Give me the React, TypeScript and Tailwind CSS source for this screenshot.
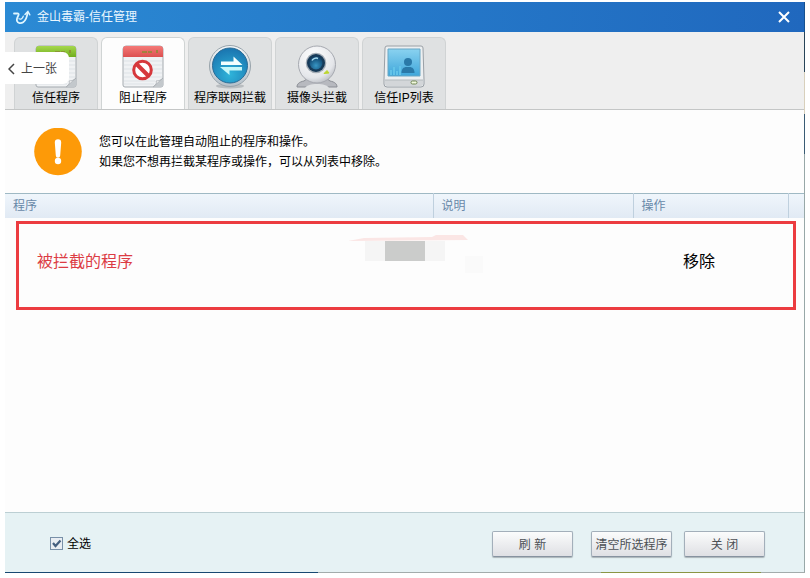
import { useState } from 'react';
import type { ReactNode } from 'react';
import { clsx } from 'clsx';

function LogoIcon() {
  return (
    <svg
      viewBox="0 0 18 15"
      className="h-[15px] w-[18px]"
      fill="none"
      stroke="#e0f6ff"
      strokeWidth="1.8"
      strokeLinecap="round"
      aria-hidden
    >
      <path d="M1 3.500h3.500c1 0 1.500.6 1 1.600C4.300 7.300 3.300 9 4 11c.8 2.400 4 2.600 6.200 1.200C12.800 10.500 14 7 14.500 3" />
      <path d="M6 8.800c1.800 1 3.700-.3 4.300-2.600" strokeWidth="1.300" />
      <path d="m12 4.500 2.900-3 1.900 3.300" strokeWidth="1.500" />
    </svg>
  );
}

function CalendarIcon({ tone, blocked }: { tone: 'green' | 'red'; blocked?: boolean }) {
  const top = tone === 'green' ? '#a5d84c' : '#f47a78';
  const bottom = tone === 'green' ? '#71ad1f' : '#dc5050';
  return (
    <svg viewBox="0 0 42 44" className="h-11 w-[42px]" aria-hidden>
      <defs>
        <linearGradient id={`cal-${tone}`} x1="0" y1="0" x2="0" y2="1">
          <stop offset="0" stopColor={top} />
          <stop offset="1" stopColor={bottom} />
        </linearGradient>
      </defs>
      <path d="M1 4a3 3 0 0 1 3-3h34a3 3 0 0 1 3 3v36a2 2 0 0 1-2 2H3a2 2 0 0 1-2-2z" fill="#f0f2f4" stroke="#a4aaaf" />
      <path d="M2 16h38M2 20h38M2 24h38M2 28h38M2 32h38M2 36h31M2 39h30" stroke="#dde2e6" />
      <path d="M1 12V4a3 3 0 0 1 3-3h34a3 3 0 0 1 3 3v8z" fill={`url(#cal-${tone})`} />
      <path d="M20 7h5M26 7h4M35 5v3" stroke="#8a8a32" strokeWidth="1.500" />
      <path d="M31 42c3-2 4-4 3-6 3 0 5-1 7-3v7a2 2 0 0 1-2 2z" fill="#c3c8cc" />
      <path d="M31 42c3-2 4-4 3-6 3 0 5-1 7-3z" fill="#fff" stroke="#a9afb4" strokeWidth=".8" />
      {blocked ? (
        <g fill="none" stroke="#d6383c" strokeWidth="3">
          <circle cx="20.500" cy="25" r="8.800" fill="#fff" />
          <path d="m14.500 19 12 12" strokeWidth="4" />
        </g>
      ) : null}
    </svg>
  );
}

function NetworkIcon() {
  return (
    <svg viewBox="0 0 42 44" className="h-11 w-[42px]" aria-hidden>
      <defs>
        <radialGradient id="net" cx=".5" cy=".75" r=".7">
          <stop offset="0" stopColor="#2fb4da" />
          <stop offset="1" stopColor="#1b78b2" />
        </radialGradient>
        <linearGradient id="net-rim" x1="0" y1="0" x2="0" y2="1">
          <stop offset="0" stopColor="#f4f7f9" />
          <stop offset="1" stopColor="#b5c0c9" />
        </linearGradient>
      </defs>
      <ellipse cx="21" cy="41" rx="14" ry="2.500" fill="#b9bdc0" />
      <circle cx="21" cy="21" r="20.500" fill="url(#net-rim)" stroke="#98a3ab" />
      <circle cx="21" cy="20.500" r="17.500" fill="url(#net)" stroke="#2b6c96" />
      <path d="M12 16.500h12.500v-5l9 8.500H12z" fill="#f3ffff" />
      <path d="M33 25.500H20.500V30L11 22h22z" fill="#c5f8fa" />
    </svg>
  );
}

function CameraIcon() {
  return (
    <svg viewBox="0 0 42 44" className="h-11 w-[42px]" aria-hidden>
      <defs>
        <radialGradient id="cam" cx=".4" cy=".3" r=".8">
          <stop offset="0" stopColor="#fff" />
          <stop offset=".7" stopColor="#e4e6ea" />
          <stop offset="1" stopColor="#aeb1b8" />
        </radialGradient>
        <radialGradient id="lens" cx=".5" cy=".7" r=".6">
          <stop offset="0" stopColor="#3796c4" />
          <stop offset="1" stopColor="#124a74" />
        </radialGradient>
      </defs>
      <path d="M1 42c0-3 2-5 7-6l4-3h18l4 3c5 1 7 3 7 6z" fill="#b7b9bf" stroke="#8b8e95" />
      <path d="M9 43c2-3 6-4 12-4s10 1 12 4z" fill="#e0e2e4" />
      <circle cx="21" cy="19.500" r="18.500" fill="url(#cam)" stroke="#a6a9b0" />
      <circle cx="20" cy="18" r="10.300" fill="#a4adb6" />
      <circle cx="20" cy="18" r="9" fill="#173a58" />
      <circle cx="20" cy="18" r="6.500" fill="url(#lens)" />
      <path d="M16 15.500c1-2 4-3 6-2" stroke="#a8dcf0" strokeWidth="1.500" fill="none" />
      <path d="m28 28.500 3-3 2 2.500z" fill="#bcd62c" stroke="#bcd62c" />
    </svg>
  );
}

function MonitorIcon() {
  return (
    <svg viewBox="0 0 42 44" className="h-11 w-[42px]" aria-hidden>
      <defs>
        <linearGradient id="screen" x1="0" y1="0" x2="0" y2="1">
          <stop offset="0" stopColor="#8ad2f0" />
          <stop offset="1" stopColor="#3ea6da" />
        </linearGradient>
      </defs>
      <path d="M4 1h34a2 2 0 0 1 2 2l1 32v4a3 3 0 0 1-3 3H4a3 3 0 0 1-3-3v-4L2 3a2 2 0 0 1 2-2z" fill="#eceff1" stroke="#9aa0a6" />
      <path d="M2 35h38v4a2 2 0 0 1-2 2H4a2 2 0 0 1-2-2z" fill="#d3d6d9" />
      <path d="M2 35h38" stroke="#b4b9bd" />
      <path d="M5 4h32v27H5z" fill="url(#screen)" stroke="#6ba7c4" />
      <path d="M8 30v-5M11 30v-8M14 30v-4M17 30v-9" stroke="#63c3e8" strokeWidth="2" />
      <circle cx="25" cy="17" r="4" fill="#2a79a8" />
      <path d="M18.500 28c0-4 2-6 5-6h3c3 0 5 2 5 6z" fill="#2a79a8" />
      <rect x="28" y="36" width="6" height="3" rx="1.500" fill="#f1f8de" stroke="#708653" />
    </svg>
  );
}

const TABS: { id: string; label: string; icon: ReactNode }[] = [
  { id: 'trusted', label: '信任程序', icon: <CalendarIcon tone="green" /> },
  { id: 'blocked', label: '阻止程序', icon: <CalendarIcon tone="red" blocked /> },
  { id: 'network', label: '程序联网拦截', icon: <NetworkIcon /> },
  { id: 'camera', label: '摄像头拦截', icon: <CameraIcon /> },
  { id: 'ip', label: '信任IP列表', icon: <MonitorIcon /> },
];

const ACTIONS = ['刷 新', '清空所选程序', '关 闭'];

function BlockedTable() {
  return (
    <div className="relative">
      <table className="w-full table-fixed border-collapse text-left">
        <colgroup>
          <col />
          <col className="w-[200px]" />
          <col className="w-[155px]" />
          <col className="w-4" />
        </colgroup>
        <thead>
          <tr className="h-[25px] bg-linear-to-b from-[#f0f6fc] to-[#e1eaf4] text-[#6888a8] shadow-[inset_0_1px_0_#9fb9c4]">
            <th className="px-2 font-normal">程序</th>
            <th className="border-l border-[#bfd0de] px-2 font-normal">说明</th>
            <th className="border-l border-[#bfd0de] px-2 font-normal">操作</th>
            <td className="border-l border-[#bfd0de]" />
          </tr>
        </thead>
        <tbody>
          <tr className="h-[92px] text-base">
            <td className="pb-1 pl-8 text-[#dc3c44]">
              <div className="flex items-center">
                <span className="w-24 shrink-0">被拦截的程序</span>
                <svg viewBox="0 0 136 44" className="-mt-4 ml-[215px] h-11 w-[136px] shrink-0" aria-hidden>
                  <path d="M0 9 16 6 84 5 88 3h27l5 5z" fill="#fbe6e5" />
                  <path d="M17 9h20v20H17zM77 9h20v20H77z" fill="#f5f5f5" />
                  <path d="M37 9h40v20H37z" fill="#cbcccb" />
                  <path d="M117 24h18v17h-18z" fill="#fafafa" />
                </svg>
              </div>
            </td>
            <td />
            <td className="pb-1 pl-[50px] text-black">
              <button type="button">移除</button>
            </td>
            <td />
          </tr>
        </tbody>
      </table>
      <div className="pointer-events-none absolute top-7 right-2 bottom-0 left-[11px] border-3 border-[#ec3c40]" />
    </div>
  );
}

export default function App() {
  const [active, setActive] = useState('blocked');
  const [allSelected, setAllSelected] = useState(true);

  return (
    <div className="relative flex min-h-screen flex-col bg-white pt-0.5 pr-[5px] pb-[5px] pl-[5px] font-['Liberation_Sans','Noto_Sans_CJK_SC',sans-serif] text-xs text-black">
      <div className="flex flex-1">
        <main className="flex min-w-0 flex-1 flex-col bg-[#fdfdfd]">
          <header className="flex h-[30px] items-center gap-1.5 bg-linear-to-r from-[#2b8ad4] to-[#2068be] px-2 text-[#eaf7ff]">
            <LogoIcon />
            <h1>金山毒霸-信任管理</h1>
            <button type="button" aria-label="关闭窗口" className="ml-auto p-1.5">
              <svg viewBox="0 0 12 12" className="size-3" stroke="#fff" strokeWidth="2" aria-hidden>
                <path d="m1 1 10 10M11 1 1 11" />
              </svg>
            </button>
          </header>

          <nav className="flex gap-[3px] border-b border-[#c4c6c6] bg-[#efefef] px-[9px] pt-[5px]">
            {TABS.map((tab) => (
              <button
                key={tab.id}
                type="button"
                onClick={() => setActive(tab.id)}
                className={clsx(
                  'flex h-[72px] w-[84px] flex-col items-center rounded-t-md border border-b-0 pt-[7px] whitespace-nowrap',
                  active === tab.id ? 'border-[#d0d4d4] bg-[#fdfdfd]' : 'border-[#d0d3d4] bg-[#dfe1e2]',
                )}
              >
                {tab.icon}
                <span className="leading-[18px]">{tab.label}</span>
              </button>
            ))}
          </nav>

          <section className="flex h-[83px] items-center gap-[17px] pl-[29px]">
            <svg viewBox="0 0 48 48" className="size-12 shrink-0" aria-hidden>
              <circle cx="24" cy="23.500" r="23.800" fill="#fd9a08" />
              <path d="M20.800 14.500a3.200 3.200 0 0 1 6.400 0l-1 13a2.200 2.200 0 0 1-4.400 0z" fill="#fff" />
              <circle cx="24" cy="33" r="3.200" fill="#fff" />
            </svg>
            <p className="leading-5">
              您可以在此管理自动阻止的程序和操作。
              <br />
              如果您不想再拦截某程序或操作，可以从列表中移除。
            </p>
          </section>

          <BlockedTable />

          <footer className="mt-auto flex h-[60px] items-center border-t border-[#bccfd3] bg-[#e6f2f4] pt-0.5 pr-[39px] pl-[45px]">
            <label className="flex items-center gap-1">
              <span className="grid">
                <input
                  type="checkbox"
                  checked={allSelected}
                  onChange={(e) => setAllSelected(e.target.checked)}
                  className="peer col-start-1 row-start-1 size-[13px] appearance-none border border-[#7890a8] bg-[#e9eef3]"
                />
                <svg
                  viewBox="0 0 13 13"
                  className="pointer-events-none invisible col-start-1 row-start-1 size-[13px] peer-checked:visible"
                  fill="none"
                  stroke="#456080"
                  strokeWidth="2.200"
                  aria-hidden
                >
                  <path d="m3 6 2.500 3L10.500 3.500" />
                </svg>
              </span>
              全选
            </label>
            <div className="ml-auto flex">
              {ACTIONS.map((label) => (
                <button
                  key={label}
                  type="button"
                  className="mr-3 h-[26px] w-[81px] rounded-xs border border-[#a3afba] border-b-[#8793a0] bg-linear-to-b from-[#fbfcfc] to-[#dfe0e4] pt-0.5 whitespace-nowrap text-[#4c5054] shadow-[0_1px_1px_#aab4b8] first:mr-[18px] last:mr-0"
                >
                  {label}
                </button>
              ))}
            </div>
          </footer>
        </main>
        <div className="w-px bg-[linear-gradient(#17518f_0_30px,#284458_30px_70px,#d8d0bc_70px_112px,#3a5c74_112px_152px,#98a8a8_152px_100%)]" />
      </div>
      <div className="h-px bg-[linear-gradient(90deg,#174872_0_313px,#a3acac_313px_596px,#8a9645_596px_756px,#a3acac_756px_100%)]" />

      <a
        href="#previous"
        className="absolute top-[52px] left-0 flex h-8 w-[69px] items-center gap-1.5 rounded-r-md bg-white pt-0.5 pl-2 text-[#444]"
      >
        <svg viewBox="0 0 7 12" className="h-3 w-[7px]" fill="none" stroke="#444" strokeWidth="1.500" aria-hidden>
          <path d="M6 1 1 6l5 5" />
        </svg>
        上一张
      </a>
    </div>
  );
}
